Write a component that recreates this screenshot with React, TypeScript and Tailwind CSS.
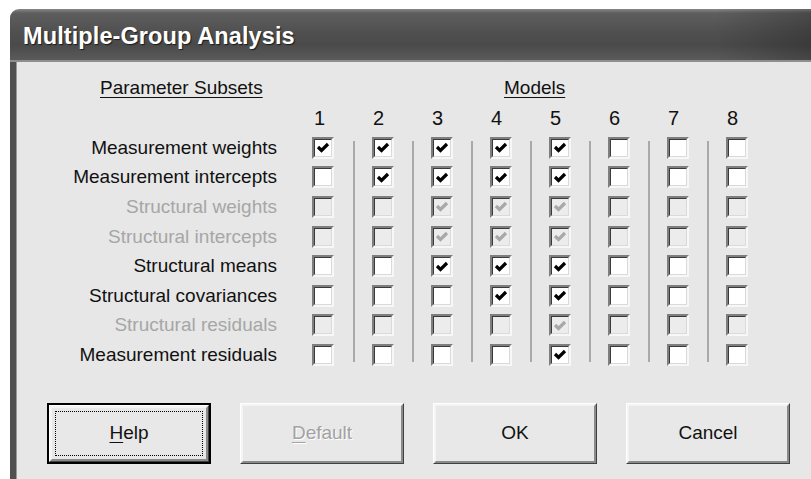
import React from 'react';

type Cell = 0 | 1; // 0 = empty, 1 = ticked

const subsets: { label: string; enabled: boolean; cells: Cell[] }[] = [
  { label: 'Measurement weights', enabled: true, cells: [1, 1, 1, 1, 1, 0, 0, 0] },
  { label: 'Measurement intercepts', enabled: true, cells: [0, 1, 1, 1, 1, 0, 0, 0] },
  { label: 'Structural weights', enabled: false, cells: [0, 0, 1, 1, 1, 0, 0, 0] },
  { label: 'Structural intercepts', enabled: false, cells: [0, 0, 1, 1, 1, 0, 0, 0] },
  { label: 'Structural means', enabled: true, cells: [0, 0, 1, 1, 1, 0, 0, 0] },
  { label: 'Structural covariances', enabled: true, cells: [0, 0, 0, 1, 1, 0, 0, 0] },
  { label: 'Structural residuals', enabled: false, cells: [0, 0, 0, 0, 1, 0, 0, 0] },
  { label: 'Measurement residuals', enabled: true, cells: [0, 0, 0, 0, 1, 0, 0, 0] },
];

const models = [1, 2, 3, 4, 5, 6, 7, 8];

function CheckBox({ checked, disabled }: { checked: boolean; disabled: boolean }) {
  return (
    <div className="w-[22px] h-[22px] flex border-2 border-t-[#7e7e7e] border-l-[#7e7e7e] border-b-[#f7f7f7] border-r-[#f7f7f7]">
      <div
        className={`flex-1 flex items-center justify-center border border-t-[#3a3a3a] border-l-[#3a3a3a] border-b-[#dadada] border-r-[#dadada] ${
          disabled ? 'bg-[#ececec]' : 'bg-white'
        }`}
      >
        {checked && (
          <svg width="14" height="11" viewBox="0 0 14 11">
            <polyline
              points="2,5 5.5,8.5 12,2"
              fill="none"
              stroke={disabled ? '#a8a8a8' : '#000'}
              strokeWidth="3.2"
            />
          </svg>
        )}
      </div>
    </div>
  );
}

function Button({
  children,
  isDefault,
}: {
  children: React.ReactNode;
  isDefault?: boolean;
}) {
  return (
    <div
      className={`w-[164px] h-[61px] flex ${isDefault ? 'border-2 border-black' : ''}`}
    >
      <div className="flex-1 flex border border-t-white border-l-white border-b-[#404040] border-r-[#404040]">
        <div className="flex-1 flex border-2 border-t-[#f4f4f4] border-l-[#f4f4f4] border-b-[#8a8a8a] border-r-[#8a8a8a] bg-[#e8e8e8] p-[3px]">
          <div
            className={`flex-1 flex items-center justify-center text-[19px] ${
              isDefault ? 'border border-dotted border-black' : 'border border-transparent'
            }`}
          >
            {children}
          </div>
        </div>
      </div>
    </div>
  );
}

export default function App() {
  return (
    <div className="w-[811px] h-[479px] bg-white overflow-hidden font-['Liberation_Sans',Arial,sans-serif] text-[#111]">
      <div className="ml-[10px] mt-[9px] h-[470px] flex flex-col">
        {/* title bar */}
        <div className="h-[53px] shrink-0 rounded-tl-[9px] flex items-center pl-[13px] pt-[5px] border-b-2 border-[#8e8e8e] bg-[linear-gradient(to_right,transparent_88%,rgba(0,0,0,0.22)_100%),linear-gradient(to_bottom,#888_0%,#5e5e5e_8%,#505050_45%,#4a4a4a_70%,#5a5a5a_100%)]">
          <span className="text-white font-bold text-[23.5px] tracking-[0.1px] [text-shadow:1px_1px_1px_#1a1a1a]">
            Multiple-Group Analysis
          </span>
        </div>

        {/* client area */}
        <div className="flex-1 bg-[#e7e7e7] border-l-[6px] border-[#505050] shadow-[inset_1px_0_0_#9a9a9a] flex flex-col">
          {/* section headings */}
          <div className="flex mt-[15px] h-[22px] leading-[22px] text-[19px]">
            <div className="w-[261px] pl-[84px]">
              <span className="underline underline-offset-[3px]">Parameter Subsets</span>
            </div>
            <div className="w-[488.5px] pl-[227px]">
              <span className="underline underline-offset-[3px]">Models</span>
            </div>
          </div>

          {/* model numbers */}
          <div className="flex mt-[8px] h-[22px] leading-[22px] text-[20px]">
            <div className="w-[274px]" />
            {models.map((m) => (
              <div key={m} className="w-[59px] text-center">
                {m}
              </div>
            ))}
          </div>

          {/* subsets × models grid */}
          <div className="flex mt-[4px]">
            <div className="w-[261px] flex flex-col text-right text-[19px] leading-[22px]">
              {subsets.map((s) => (
                <div
                  key={s.label}
                  className={`h-[29.6px] flex items-center justify-end ${
                    s.enabled ? 'text-[#111]' : 'text-[#a6a6a6]'
                  }`}
                >
                  {s.label}
                </div>
              ))}
            </div>
            <div className="w-[16.5px]" />
            {models.map((m, col) => (
              <div key={m} className="w-[59px] flex">
                {col > 0 && <div className="w-[2px] my-[8px] bg-[#a9a9a9]" />}
                <div className="flex-1 flex flex-col items-center">
                  {subsets.map((s) => (
                    <div key={s.label} className="h-[29.6px] flex items-center">
                      <CheckBox checked={s.cells[col] === 1} disabled={!s.enabled} />
                    </div>
                  ))}
                </div>
              </div>
            ))}
          </div>

          {/* dialog buttons */}
          <div className="flex gap-[29px] pl-[31px] mt-[33px]">
            <Button isDefault>
              <span>
                <span className="underline underline-offset-[3px]">H</span>elp
              </span>
            </Button>
            <Button>
              <span className="text-[#a2a2a2] [text-shadow:1px_1px_0_#fff]">
                <span className="underline underline-offset-[3px]">D</span>efault
              </span>
            </Button>
            <Button>OK</Button>
            <Button>Cancel</Button>
          </div>
        </div>
      </div>
    </div>
  );
}
